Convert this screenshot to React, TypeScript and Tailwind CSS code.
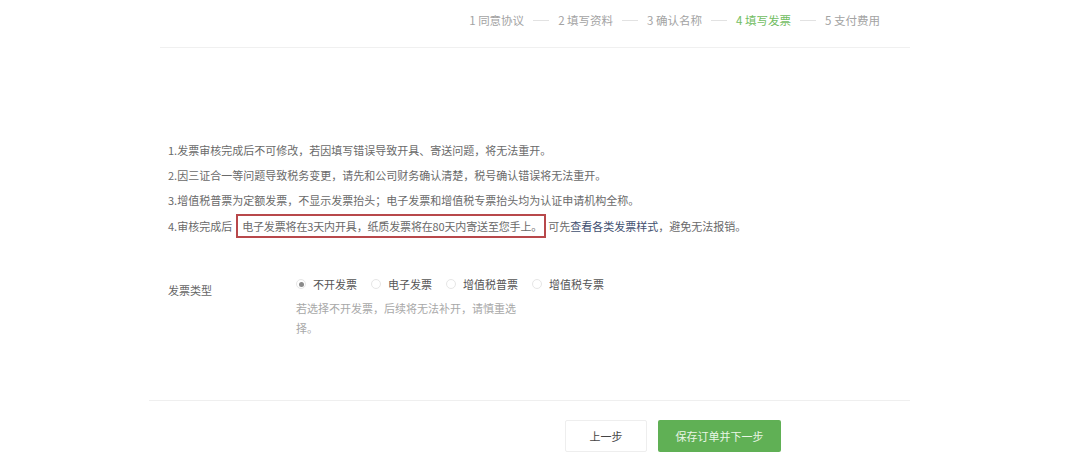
import React from "react";

const font = { fontFamily: '"Noto Sans CJK SC", "Noto Sans", sans-serif' };

function Step({ n, label, active }: { n: number; label: string; active?: boolean }) {
  return (
    <span className={active ? "text-[#72bd62]" : "text-[#a3a3a3]"}>
      {n} {label}
    </span>
  );
}

function Dash() {
  return <span className="block h-px w-[16px] bg-[#e2e2e2]" />;
}

function Radio({ checked, label }: { checked?: boolean; label: string }) {
  return (
    <div className="flex items-center gap-[7px]">
      <span className="flex h-[10px] w-[10px] items-center justify-center rounded-full border border-[#e6e6e6]">
        {checked && <span className="h-[5px] w-[5px] rounded-full bg-[#8a8a8a]" />}
      </span>
      <span className="text-[#555]">{label}</span>
    </div>
  );
}

export default function App() {
  return (
    <div className="h-[460px] w-[1080px] overflow-hidden bg-white" style={font}>
      <div className="ml-[160px] w-[750px]">
        <div className="flex h-[48px] items-center justify-end gap-[9px] border-b border-[#f0f0f0] pr-[30px] pb-[6px] text-[11.5px]">
          <Step n={1} label="同意协议" />
          <Dash />
          <Step n={2} label="填写资料" />
          <Dash />
          <Step n={3} label="确认名称" />
          <Dash />
          <Step n={4} label="填写发票" active />
          <Dash />
          <Step n={5} label="支付费用" />
        </div>

        <div className="mt-[90px] pl-[8px] text-[11px] leading-[25px] text-[#6a6a6a]">
          <div>1.发票审核完成后不可修改，若因填写错误导致开具、寄送问题，将无法重开。</div>
          <div>2.因三证合一等问题导致税务变更，请先和公司财务确认清楚，税号确认错误将无法重开。</div>
          <div>3.增值税普票为定额发票，不显示发票抬头；电子发票和增值税专票抬头均为认证申请机构全称。</div>
          <div className="flex h-[26px] items-center">
            <span>4.审核完成后</span>
            <span className="ml-[4px] flex h-[24px] items-center border-2 border-[#b8484b] pl-[4px] pr-[2px] leading-none tracking-[-0.15px]">
              电子发票将在3天内开具，纸质发票将在80天内寄送至您手上。
            </span>
            <span className="ml-[2px]">
              可先<span className="text-[#3f4f70]">查看各类发票样式</span>，避免无法报销。
            </span>
          </div>
        </div>

        <div className="mt-[33px] flex pl-[8px] text-[11px]">
          <div className="w-[128px] pt-[10px] text-[#666]">发票类型</div>
          <div>
            <div className="flex h-[24px] items-center gap-[14px]">
              <Radio checked label="不开发票" />
              <Radio label="电子发票" />
              <Radio label="增值税普票" />
              <Radio label="增值税专票" />
            </div>
            <div className="mt-[2px] w-[226px] leading-[20px] text-[#a8a8a8]">
              若选择不开发票，后续将无法补开，请慎重选择。
            </div>
          </div>
        </div>
      </div>

      <div className="ml-[149px] mt-[62px] h-px w-[761px] bg-[#efefef]" />

      <div className="ml-[565px] mt-[19px] flex gap-[11px] text-[11px]">
        <button className="h-[32px] w-[82px] rounded-[2px] border border-[#eeeeee] bg-white text-[#444]">
          上一步
        </button>
        <button className="h-[32px] w-[123px] rounded-[2px] bg-[#60b055] text-[#eaf6e6]">
          保存订单并下一步
        </button>
      </div>
    </div>
  );
}
